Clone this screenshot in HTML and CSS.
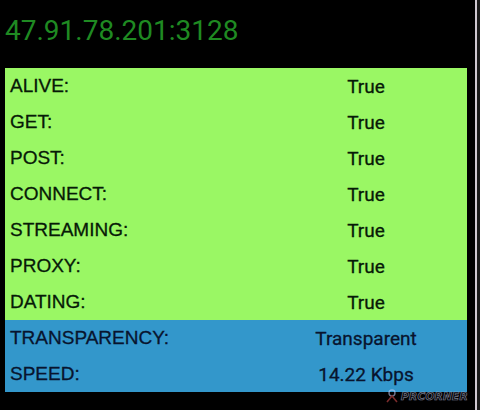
FILE: index.html
```html
<!DOCTYPE html>
<html lang="en">
<head>
  <meta charset="UTF-8">
  <meta name="viewport" content="width=device-width, initial-scale=1.0">
  <title>Proxy Checker</title>
  <link rel="stylesheet" href="styles.css">
</head>
<body>

  <div class="screen">
    <h1 class="host">47.91.78.201:3128</h1>

    <div class="results">
      <div class="row ok"><span class="label">ALIVE:</span><span class="value">True</span></div>
      <div class="row ok"><span class="label">GET:</span><span class="value">True</span></div>
      <div class="row ok"><span class="label">POST:</span><span class="value">True</span></div>
      <div class="row ok"><span class="label">CONNECT:</span><span class="value">True</span></div>
      <div class="row ok"><span class="label">STREAMING:</span><span class="value">True</span></div>
      <div class="row ok"><span class="label">PROXY:</span><span class="value">True</span></div>
      <div class="row ok"><span class="label">DATING:</span><span class="value">True</span></div>
      <div class="row info"><span class="label">TRANSPARENCY:</span><span class="value">Transparent</span></div>
      <div class="row info"><span class="label">SPEED:</span><span class="value">14.22 Kbps</span></div>
    </div>

    <div class="stamp">
      <svg width="12" height="14" viewBox="0 0 12 14">
        <circle cx="6" cy="4" r="3" fill="none" stroke="#c9d3ff" stroke-width="1.4"/>
        <path d="M1 13 L6 7 L11 13" fill="none" stroke="#e05050" stroke-width="1.6"/>
      </svg>
      <span>PRCORNER</span>
    </div>
  </div>

</body>
</html>
```

FILE: styles.css
```css
body {
  margin: 0;
  background: linear-gradient(to right, #000 475px, #cfc8d0 475px, #cfc8d0 477px, #1a1a1a 477px);
  font-family: 'Liberation Sans', Arial, sans-serif;
}

.screen {
  position: relative;
  width: 480px;
  height: 410px;
}

.host {
  margin: 0;
  padding: 13px 0 19px 5px;
  font-family: Roboto, sans-serif;
  font-weight: 400;
  font-size: 28px;
  line-height: 36px;
  color: #1f8a22;
}

.results {
  margin-left: 5px;
  width: 462px;
}

.row {
  display: grid;
  grid-template-columns: 260px 1fr;
  align-items: center;
  height: 36px;
}

.row.ok {
  background-color: #9af764;
  color: #071a07;
}

.row.info {
  background-color: #3397cb;
  color: #08142e;
}

.label {
  padding-left: 5px;
  font-size: 19px;
  -webkit-text-stroke: 0.3px currentColor;
}

.value {
  text-align: center;
  font-family: Roboto, sans-serif;
  font-size: 19px;
  -webkit-text-stroke: 0.3px currentColor;
}

/* watermark in the corner */
.stamp {
  position: absolute;
  left: 386px;
  top: 389px;
  display: flex;
  align-items: center;
  gap: 3px;
  opacity: 0.55;
}

.stamp span {
  font-family: 'DejaVu Sans', sans-serif;
  font-style: italic;
  font-weight: bold;
  font-size: 10.5px;
  letter-spacing: 0.3px;
  color: transparent;
  -webkit-text-stroke: 0.7px #d8def8;
}
```
